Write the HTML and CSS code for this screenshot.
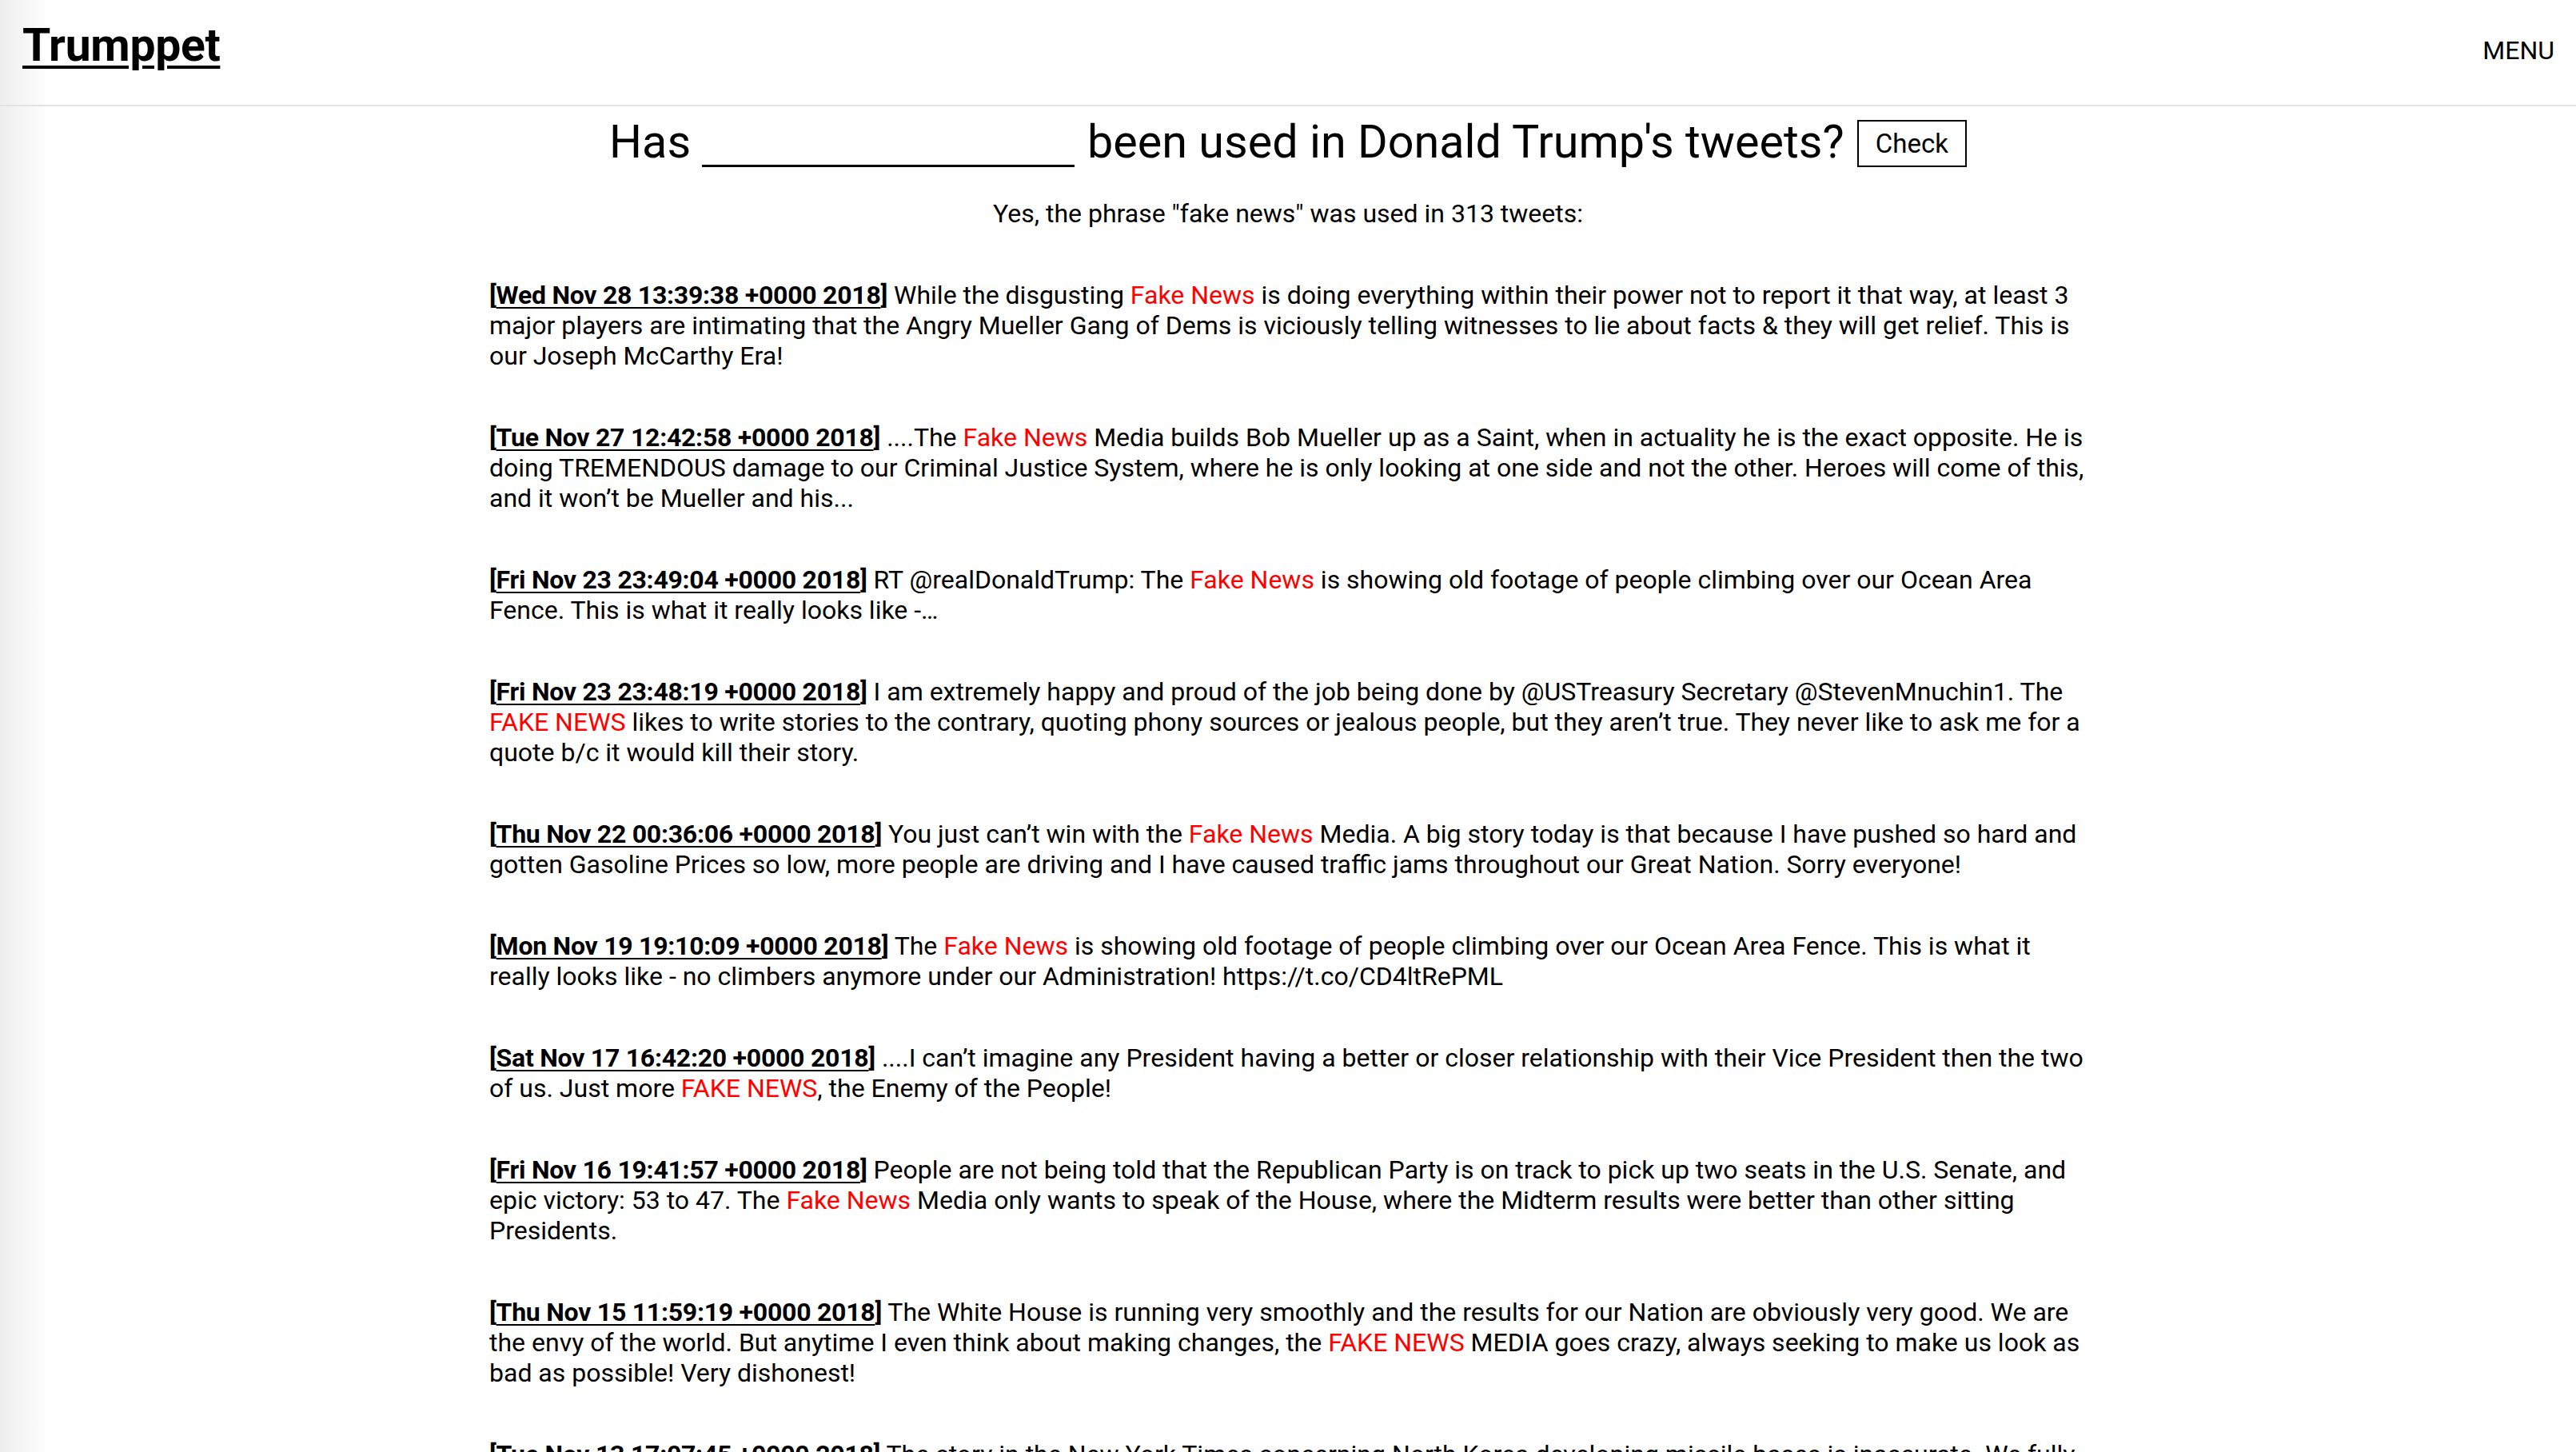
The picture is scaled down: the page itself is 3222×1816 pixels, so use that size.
FILE: index.html
```html
<!DOCTYPE html>
<html lang="en">
<head>
<meta charset="utf-8">
<title>Trumppet</title>
<link rel="stylesheet" href="styles.css">
</head>
<body>
<header class="topbar">
  <a class="brand" href="#">Trumppet</a>
  <span class="menu">MENU</span>
</header>
<main class="page">
  <form class="ask">
    <span class="ask-text">Has</span>
    <input class="ask-input" type="text" value="">
    <span class="ask-text">been used in Donald Trump's tweets?</span>
    <button class="ask-btn" type="button">Check</button>
  </form>
  <p class="result">Yes, the phrase "fake news" was used in 313 tweets:</p>
  <div class="tweets">
    <p class="tweet"><b>[<a href="#">Wed Nov 28 13:39:38 +0000 2018</a>]</b> While the disgusting <span class="hit">Fake News</span> is doing everything within their power not to report it that way, at least 3 major players are intimating that the Angry Mueller Gang of Dems is viciously telling witnesses to lie about facts &amp; they will get relief. This is our Joseph McCarthy Era!</p>
    <p class="tweet"><b>[<a href="#">Tue Nov 27 12:42:58 +0000 2018</a>]</b> ....The <span class="hit">Fake News</span> Media builds Bob Mueller up as a Saint, when in actuality he is the exact opposite. He is doing TREMENDOUS damage to our Criminal Justice System, where he is only looking at one side and not the other. Heroes will come of this, and it won’t be Mueller and his...</p>
    <p class="tweet"><b>[<a href="#">Fri Nov 23 23:49:04 +0000 2018</a>]</b> RT @realDonaldTrump: The <span class="hit">Fake News</span> is showing old footage of people climbing over our Ocean Area Fence. This is what it really looks like -…</p>
    <p class="tweet"><b>[<a href="#">Fri Nov 23 23:48:19 +0000 2018</a>]</b> I am extremely happy and proud of the job being done by @USTreasury Secretary @StevenMnuchin1. The <span class="hit">FAKE NEWS</span> likes to write stories to the contrary, quoting phony sources or jealous people, but they aren’t true. They never like to ask me for a quote b/c it would kill their story.</p>
    <p class="tweet"><b>[<a href="#">Thu Nov 22 00:36:06 +0000 2018</a>]</b> You just can’t win with the <span class="hit">Fake News</span> Media. A big story today is that because I have pushed so hard and gotten Gasoline Prices so low, more people are driving and I have caused traffic jams throughout our Great Nation. Sorry everyone!</p>
    <p class="tweet"><b>[<a href="#">Mon Nov 19 19:10:09 +0000 2018</a>]</b> The <span class="hit">Fake News</span> is showing old footage of people climbing over our Ocean Area Fence. This is what it really looks like - no climbers anymore under our Administration! https://t.co/CD4ltRePML</p>
    <p class="tweet"><b>[<a href="#">Sat Nov 17 16:42:20 +0000 2018</a>]</b> ....I can’t imagine any President having a better or closer relationship with their Vice President then the two of us. Just more <span class="hit">FAKE NEWS</span>, the Enemy of the People!</p>
    <p class="tweet"><b>[<a href="#">Fri Nov 16 19:41:57 +0000 2018</a>]</b> People are not being told that the Republican Party is on track to pick up two seats in the U.S. Senate, and epic victory: 53 to 47. The <span class="hit">Fake News</span> Media only wants to speak of the House, where the Midterm results were better than other sitting Presidents.</p>
    <p class="tweet"><b>[<a href="#">Thu Nov 15 11:59:19 +0000 2018</a>]</b> The White House is running very smoothly and the results for our Nation are obviously very good. We are the envy of the world. But anytime I even think about making changes, the <span class="hit">FAKE NEWS</span> MEDIA goes crazy, always seeking to make us look as bad as possible! Very dishonest!</p>
    <p class="tweet"><b>[<a href="#">Tue Nov 13 17:07:45 +0000 2018</a>]</b> The story in the New York Times concerning North Korea developing missile bases is inaccurate. We fully know about the sites being discussed, nothing new - and nothing happening out of the normal. Just more <span class="hit">Fake News</span>. I will be the first to let you know if things go bad!</p>
  </div>
</main>
</body>
</html>
```

FILE: styles.css
```css
html, body {
  margin: 0;
  padding: 0;
}
body {
  font-family: Roboto, "Liberation Sans", Arial, sans-serif;
  font-size: 32px;
  line-height: 38px;
  color: #000;
  background: linear-gradient(to right, #ededed 0, #ffffff 62px) fixed;
  min-height: 100vh;
}
.topbar {
  display: flex;
  justify-content: space-between;
  align-items: flex-start;
  height: 131px;
  padding: 0 27px 0 28px;
  border-bottom: 2px solid #e4e4e4;
  box-sizing: content-box;
}
.brand {
  font-size: 57px;
  line-height: 69px;
  font-weight: bold;
  color: #000;
  margin-top: 22px;
  letter-spacing: -0.3px;
  text-decoration-thickness: 4px;
  text-underline-offset: 6px;
}
.menu {
  font-size: 32px;
  line-height: 40px;
  margin-top: 43px;
}
.ask {
  display: flex;
  justify-content: center;
  align-items: flex-end;
  gap: 16px;
  margin: 12px 0 0;
}
.ask-text {
  font-size: 57.5px;
  line-height: 66px;
}
.ask-input {
  width: 466px;
  height: 50px;
  border: none;
  border-bottom: 3px solid #000;
  background: transparent;
  margin: 0 0 2px -2px;
  padding: 0;
  font-family: inherit;
  font-size: 40px;
  outline: none;
}
.ask-btn {
  font-family: inherit;
  font-size: 33px;
  line-height: 40px;
  background: #fff;
  color: #000;
  border: 2px solid #000;
  padding: 8px 21px 7px;
  margin: 0 0 2px;
  border-radius: 0;
}
.result {
  text-align: center;
  margin: 37px 0 0;
}
.tweets {
  width: 1998px;
  margin: 0 auto;
  padding-top: 64px;
}
.tweet {
  margin: 0 0 64px;
}
.tweet b {
  font-weight: bold;
  letter-spacing: -0.25px;
}
.tweet a {
  color: #000;
  text-decoration-thickness: 2px;
  text-underline-offset: 4px;
}
.hit {
  color: #ff0000;
}
```
